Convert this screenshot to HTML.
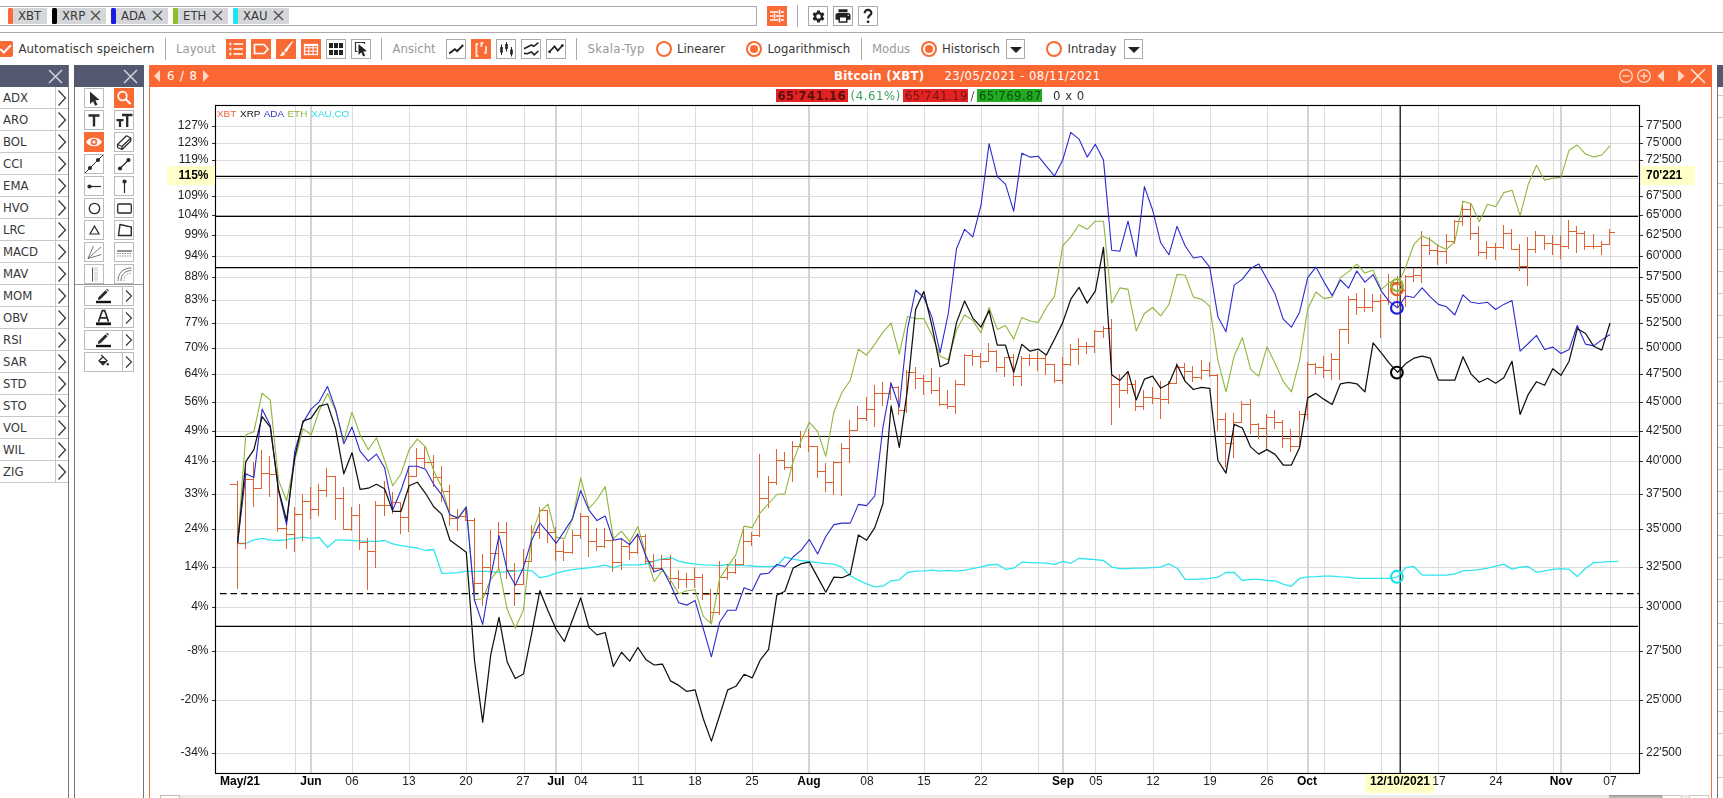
<!DOCTYPE html><html><head><meta charset="utf-8"><title>Chart</title><style>
html,body{margin:0;padding:0}
body{width:1723px;height:798px;overflow:hidden;background:#fff;position:relative;font:13px "DejaVu Sans Condensed","DejaVu Sans","Liberation Sans",sans-serif;color:#383838}
.a{position:absolute}
.t{position:absolute;white-space:nowrap;line-height:16px;height:16px}
.g{color:#999}
.btn{position:absolute;width:18px;height:18px;border:1px solid #aaa;background:#fff;box-sizing:content-box}
.btn.on{background:#f96a35;border-color:#f96a35}
.btn svg{position:absolute;left:0;top:0}
.btn.on svg,.tb.on svg{left:-1px;top:-1px}
.sep{position:absolute;width:1px;background:#aaa;top:38px;height:22px}
.tag{position:absolute;top:8px;height:15.500px;background:#d5d6da;line-height:15.500px}
.tag i{position:absolute;left:0;top:0;width:5px;height:15.500px;border-radius:1.500px}
.tag span{position:absolute;left:10px;top:0}
.tag svg{position:absolute;top:2px}
.radio{position:absolute;width:12px;height:12px;border:2px solid #f96a35;border-radius:50%;top:40.800px;box-sizing:content-box}
.radio.on:after{content:"";position:absolute;left:2px;top:2px;width:8px;height:8px;border-radius:50%;background:#f96a35}
.dd{position:absolute;top:39px;width:17px;height:18px;border:1px solid #aaa;background:#fff}
.dd:after{content:"";position:absolute;left:2.500px;top:6.500px;border:6px solid transparent;border-top:6px solid #222;border-bottom:0}
.ph{position:absolute;top:65px;height:22px;background:#555970}
.row{position:absolute;left:0;width:68px;height:21px;border-bottom:1px solid #c8c8c8}
.row span{position:absolute;left:3px;top:3px;line-height:16px}
.row b{position:absolute;left:55px;top:0;width:1px;height:21px;background:#c8c8c8}
.row svg{position:absolute;left:57px;top:2px}
.tb{position:absolute;width:18px;height:18px;border:1px solid #bbb;background:#fff}
.tb.on{background:#f96a35;border-color:#f96a35}
.tb svg{position:absolute;left:0;top:0}
.tw{position:absolute;left:84px;width:48px;height:18px;border:1px solid #bbb;background:#fff}
.tw b{position:absolute;left:37px;top:0;width:1px;height:18px;background:#bbb}
.tw svg{position:absolute;left:0;top:0}
</style></head><body>
<div class="a" style="left:-2px;top:6px;width:757px;height:18px;border:1px solid #aaa"></div>
<div class="tag" style="left:8px;width:39px"><i style="background:#f96a35"></i><span>XBT</span></div>
<div class="tag" style="left:52px;width:54px"><i style="background:#000"></i><span>XRP</span><svg style="left:38px" width="11" height="11" viewBox="0 0 11 11"><path d="M1 1L10 10M10 1L1 10" stroke="#4a4a4a" stroke-width="1.250"/></svg></div>
<div class="tag" style="left:111px;width:57px"><i style="background:#1a1ae6"></i><span>ADA</span><svg style="left:41px" width="11" height="11" viewBox="0 0 11 11"><path d="M1 1L10 10M10 1L1 10" stroke="#4a4a4a" stroke-width="1.250"/></svg></div>
<div class="tag" style="left:173px;width:55px"><i style="background:#8cbf26"></i><span>ETH</span><svg style="left:39px" width="11" height="11" viewBox="0 0 11 11"><path d="M1 1L10 10M10 1L1 10" stroke="#4a4a4a" stroke-width="1.250"/></svg></div>
<div class="tag" style="left:233px;width:56px"><i style="background:#19e6f0"></i><span>XAU</span><svg style="left:40px" width="11" height="11" viewBox="0 0 11 11"><path d="M1 1L10 10M10 1L1 10" stroke="#4a4a4a" stroke-width="1.250"/></svg></div>
<div class="btn on" style="left:767px;top:6px;width:18px;height:18px"><svg width="20" height="20" viewBox="0 0 20 20"><path d="M3 6H11M14 6H17M3 10H6M9 10H17M3 14H11M14 14H17" stroke="#fff" stroke-width="1.3"/><path d="M12.5 3.5V8.5M7.5 7.5V12.5M12.5 11.5V16.5" stroke="#fff" stroke-width="1.6"/></svg></div>
<div class="sep" style="left:797px;top:5px;height:22px"></div>
<div class="btn" style="left:808px;top:6px"><svg width="15" height="15" style="left:1.500px;top:1.500px" viewBox="0 0 24 24"><path fill="#222" d="M19.14 12.94c.04-.3.06-.61.06-.94 0-.32-.02-.64-.07-.94l2.03-1.58a.49.49 0 0 0 .12-.61l-1.92-3.32a.49.49 0 0 0-.59-.22l-2.39.96c-.5-.38-1.03-.7-1.62-.94l-.36-2.54a.484.484 0 0 0-.48-.41h-3.84c-.24 0-.43.17-.47.41l-.36 2.54c-.59.24-1.13.57-1.62.94l-2.39-.96a.49.49 0 0 0-.59.22L2.74 8.87c-.12.21-.08.47.12.61l2.03 1.58c-.05.3-.09.63-.09.94s.02.64.07.94l-2.03 1.58a.49.49 0 0 0-.12.61l1.92 3.32c.12.22.37.29.59.22l2.39-.96c.5.38 1.03.7 1.62.94l.36 2.54c.05.24.24.41.48.41h3.84c.24 0 .44-.17.47-.41l.36-2.54c.59-.24 1.13-.56 1.62-.94l2.39.96c.22.08.47 0 .59-.22l1.92-3.32c.12-.22.07-.47-.12-.61l-2.01-1.58zM12 15.6A3.6 3.6 0 1 1 12 8.4a3.6 3.6 0 0 1 0 7.2z"/></svg></div>
<div class="btn" style="left:833px;top:6px"><svg width="18" height="18" viewBox="0 0 24 24"><path fill="#222" d="M19 8H5c-1.66 0-3 1.34-3 3v6h4v4h12v-4h4v-6c0-1.66-1.340-3-3-3zm-3 11H8v-5h8v5zm3-7c-.55 0-1-.45-1-1s.45-1 1-1 1 .45 1 1-.45 1-1 1zm-1-9H6v4h12V3z"/></svg></div>
<div class="btn" style="left:858px;top:6px"><svg width="18" height="18" viewBox="0 0 18 18"><path d="M5.6 6.2C5.6 4 7 2.9 9 2.9S12.400 4 12.400 5.900C12.400 8.400 9 8.400 9 11.400" stroke="#222" stroke-width="2.100" fill="none"/><circle cx="9" cy="14.800" r="1.400" fill="#222"/></svg></div>
<div class="a" style="left:0;top:32px;width:1723px;height:1px;background:#aaa"></div>
<div class="a" style="left:-3px;top:41px;width:16px;height:16px;border-radius:2px;background:#f96a35"><svg class="a" style="left:0;top:0" width="16" height="16" viewBox="0 0 15 15"><path d="M3 7.500L6.400 10.800L13 4" stroke="#fff" stroke-width="1.8" fill="none"/></svg></div>
<div class="t" style="left:18.500px;top:41px;letter-spacing:.09px">Automatisch speichern</div>
<div class="sep" style="left:165px"></div>
<div class="t g" style="left:176px;top:41px">Layout</div>
<div class="btn on" style="left:226px;top:39px"><svg width="20" height="20" viewBox="0 0 20 20"><path d="M3.500 5h1.800M3.500 10h1.800M3.500 15h1.800" stroke="#fff" stroke-width="2.400"/><path d="M7.500 5H17M7.500 10H17M7.500 15H17" stroke="#fff" stroke-width="1.700"/></svg></div>
<div class="btn on" style="left:251px;top:39px"><svg width="20" height="20" viewBox="0 0 20 20"><path d="M3.500 5.500H13L17 10L13 14.500H3.500Z" stroke="#fff" stroke-width="1.700" fill="none" stroke-linejoin="round"/></svg></div>
<div class="btn on" style="left:276px;top:39px"><svg width="20" height="20" viewBox="0 0 20 20"><path d="M16.500 2.500L8.500 11.500L10 13Z" fill="#fff" stroke="#fff" stroke-width="1"/><path d="M8 12.500c-1.500 0-2.300 1-2.600 2.200-.2 1-.8 1.600-1.700 2 1.800.5 3.800.2 4.800-.9.800-.9.700-2.100-.5-3.300z" fill="#fff"/></svg></div>
<div class="btn on" style="left:301px;top:39px"><svg width="20" height="20" viewBox="0 0 20 20"><rect x="3.500" y="5.500" width="13" height="10" fill="none" stroke="#fff" stroke-width="1.300"/><path d="M3.500 8.800H16.500M3.500 12.100H16.500M7.800 5.500V15.500M12.100 5.500V15.500" stroke="#fff" stroke-width="1"/><rect x="3.500" y="5" width="13" height="2" fill="#fff"/></svg></div>
<div class="btn" style="left:326px;top:39px"><svg width="18" height="18" viewBox="0 0 18 18"><path d="M2 3h4v5H2zM7 3h4v5H7zM12 3h4v5h-4zM2 10h4v5H2zM7 10h4v5H7zM12 10h4v5h-4z" fill="#222"/></svg></div>
<div class="btn" style="left:351px;top:39px"><svg width="18" height="18" viewBox="0 0 18 18"><path d="M5.500 11.500H3.500V2.500H12.500V4" stroke="#333" stroke-width="1.200" fill="none"/><path d="M6.500 4L6.500 15L9.300 12.300L11.200 16.500L13.200 15.600L11.300 11.500L15 11.300Z" fill="#222"/></svg></div>
<div class="sep" style="left:381px"></div>
<div class="t g" style="left:392.500px;top:41px">Ansicht</div>
<div class="btn" style="left:446px;top:39px"><svg width="18" height="18" viewBox="0 0 18 18"><path d="M2.200 13.400L7.800 9.200L10.100 11.100L16.200 5" stroke="#222" stroke-width="1.900" fill="none"/></svg></div>
<div class="btn on" style="left:471px;top:39px"><svg width="20" height="20" viewBox="0 0 20 20"><path d="M7.300 4.800H5.400V17H7.400M10.400 8V3.900H12.600M13 13.800H15V7" stroke="#ffe6da" stroke-width="1.800" fill="none"/></svg></div>
<div class="btn" style="left:496px;top:39px"><svg width="18" height="18" viewBox="0 0 18 18"><path d="M4.500 4.500V15M9.500 2V11.500M14.500 7V16.500" stroke="#222" stroke-width="1"/><rect x="3.200" y="7" width="2.600" height="5.500" fill="#222"/><rect x="8.200" y="4" width="2.600" height="5" fill="#222"/><rect x="13.200" y="9.500" width="2.600" height="5" fill="#222"/></svg></div>
<div class="btn" style="left:521px;top:39px"><svg width="18" height="18" viewBox="0 0 18 18"><path d="M2 8.700L9.400 5L11.700 6.400L16.400 2.700M2 13.400L5.200 13.800L9.400 12L12.200 14.800L16.400 11" stroke="#222" stroke-width="1.600" fill="none"/></svg></div>
<div class="btn" style="left:546px;top:39px"><svg width="18" height="18" viewBox="0 0 18 18"><path d="M2.400 12L7.500 6.400L10.800 10.600L15.400 5.500" stroke="#222" stroke-width="1.700" fill="none"/><circle cx="2.600" cy="11.800" r="1.400" fill="#222"/><circle cx="15.300" cy="5.600" r="1.400" fill="#222"/></svg></div>
<div class="sep" style="left:576px"></div>
<div class="t g" style="left:587.500px;top:41px;letter-spacing:.37px">Skala-Typ</div>
<div class="radio" style="left:655.800px"></div><div class="t" style="left:677px;top:41px">Linearer</div>
<div class="radio on" style="left:745.800px"></div><div class="t" style="left:767.500px;top:41px">Logarithmisch</div>
<div class="sep" style="left:861px"></div>
<div class="t g" style="left:872px;top:41px">Modus</div>
<div class="radio on" style="left:921.200px"></div><div class="t" style="left:942px;top:41px">Historisch</div>
<div class="dd" style="left:1006px"></div>
<div class="radio" style="left:1045.700px"></div><div class="t" style="left:1067.500px;top:41px">Intraday</div>
<div class="dd" style="left:1124px"></div>
<div class="ph" style="left:0;width:68px"></div><svg class="a" style="left:47.5px;top:68.5px" width="15" height="15" viewBox="0 0 15 15"><path d="M1 1L14 14M14 1L1 14" stroke="#d2d3dc" stroke-width="1.5" fill="none"/></svg>
<div class="row" style="top:87px"><span>ADX</span><b></b><svg width="10" height="18" viewBox="0 0 10 18"><path d="M1.500 1.500L8.500 9L1.500 16.500" stroke="#333" stroke-width="1.200" fill="none"/></svg></div>
<div class="row" style="top:109px"><span>ARO</span><b></b><svg width="10" height="18" viewBox="0 0 10 18"><path d="M1.500 1.500L8.500 9L1.500 16.500" stroke="#333" stroke-width="1.200" fill="none"/></svg></div>
<div class="row" style="top:131px"><span>BOL</span><b></b><svg width="10" height="18" viewBox="0 0 10 18"><path d="M1.500 1.500L8.500 9L1.500 16.500" stroke="#333" stroke-width="1.200" fill="none"/></svg></div>
<div class="row" style="top:153px"><span>CCI</span><b></b><svg width="10" height="18" viewBox="0 0 10 18"><path d="M1.500 1.500L8.500 9L1.500 16.500" stroke="#333" stroke-width="1.200" fill="none"/></svg></div>
<div class="row" style="top:175px"><span>EMA</span><b></b><svg width="10" height="18" viewBox="0 0 10 18"><path d="M1.500 1.500L8.500 9L1.500 16.500" stroke="#333" stroke-width="1.200" fill="none"/></svg></div>
<div class="row" style="top:197px"><span>HVO</span><b></b><svg width="10" height="18" viewBox="0 0 10 18"><path d="M1.500 1.500L8.500 9L1.500 16.500" stroke="#333" stroke-width="1.200" fill="none"/></svg></div>
<div class="row" style="top:219px"><span>LRC</span><b></b><svg width="10" height="18" viewBox="0 0 10 18"><path d="M1.500 1.500L8.500 9L1.500 16.500" stroke="#333" stroke-width="1.200" fill="none"/></svg></div>
<div class="row" style="top:241px"><span>MACD</span><b></b><svg width="10" height="18" viewBox="0 0 10 18"><path d="M1.500 1.500L8.500 9L1.500 16.500" stroke="#333" stroke-width="1.200" fill="none"/></svg></div>
<div class="row" style="top:263px"><span>MAV</span><b></b><svg width="10" height="18" viewBox="0 0 10 18"><path d="M1.500 1.500L8.500 9L1.500 16.500" stroke="#333" stroke-width="1.200" fill="none"/></svg></div>
<div class="row" style="top:285px"><span>MOM</span><b></b><svg width="10" height="18" viewBox="0 0 10 18"><path d="M1.500 1.500L8.500 9L1.500 16.500" stroke="#333" stroke-width="1.200" fill="none"/></svg></div>
<div class="row" style="top:307px"><span>OBV</span><b></b><svg width="10" height="18" viewBox="0 0 10 18"><path d="M1.500 1.500L8.500 9L1.500 16.500" stroke="#333" stroke-width="1.200" fill="none"/></svg></div>
<div class="row" style="top:329px"><span>RSI</span><b></b><svg width="10" height="18" viewBox="0 0 10 18"><path d="M1.500 1.500L8.500 9L1.500 16.500" stroke="#333" stroke-width="1.200" fill="none"/></svg></div>
<div class="row" style="top:351px"><span>SAR</span><b></b><svg width="10" height="18" viewBox="0 0 10 18"><path d="M1.500 1.500L8.500 9L1.500 16.500" stroke="#333" stroke-width="1.200" fill="none"/></svg></div>
<div class="row" style="top:373px"><span>STD</span><b></b><svg width="10" height="18" viewBox="0 0 10 18"><path d="M1.500 1.500L8.500 9L1.500 16.500" stroke="#333" stroke-width="1.200" fill="none"/></svg></div>
<div class="row" style="top:395px"><span>STO</span><b></b><svg width="10" height="18" viewBox="0 0 10 18"><path d="M1.500 1.500L8.500 9L1.500 16.500" stroke="#333" stroke-width="1.200" fill="none"/></svg></div>
<div class="row" style="top:417px"><span>VOL</span><b></b><svg width="10" height="18" viewBox="0 0 10 18"><path d="M1.500 1.500L8.500 9L1.500 16.500" stroke="#333" stroke-width="1.200" fill="none"/></svg></div>
<div class="row" style="top:439px"><span>WIL</span><b></b><svg width="10" height="18" viewBox="0 0 10 18"><path d="M1.500 1.500L8.500 9L1.500 16.500" stroke="#333" stroke-width="1.200" fill="none"/></svg></div>
<div class="row" style="top:461px"><span>ZIG</span><b></b><svg width="10" height="18" viewBox="0 0 10 18"><path d="M1.500 1.500L8.500 9L1.500 16.500" stroke="#333" stroke-width="1.200" fill="none"/></svg></div>
<div class="a" style="left:68px;top:65px;width:1px;height:733px;background:#777"></div>
<div class="a" style="left:74px;top:65px;width:70px;height:733px;border-left:1px solid #777;border-right:1px solid #777;box-sizing:border-box"></div>
<div class="ph" style="left:74px;width:70px"></div><svg class="a" style="left:122.5px;top:68.5px" width="15" height="15" viewBox="0 0 15 15"><path d="M1 1L14 14M14 1L1 14" stroke="#d2d3dc" stroke-width="1.5" fill="none"/></svg>
<div class="tb" style="left:84px;top:88px"><svg width="18" height="18" viewBox="0 0 18 18"><path d="M5 2.500L5 15L8 12.200L10.200 16.800L12.500 15.700L10.400 11.200L14.500 11Z" fill="#2a2a2a"/></svg></div>
<div class="tb on" style="left:114px;top:88px"><svg width="20" height="20" viewBox="0 0 20 20"><circle cx="8.500" cy="8" r="4.300" stroke="#fff" stroke-width="1.700" fill="none"/><path d="M11.800 11.300L16.500 16" stroke="#fff" stroke-width="2"/></svg></div>
<div class="tb" style="left:84px;top:110px"><svg width="18" height="18" viewBox="0 0 18 18"><path d="M3.500 4.500H14.500M9 4.500V15.500" stroke="#2a2a2a" stroke-width="2.400" fill="none"/></svg></div>
<div class="tb" style="left:114px;top:110px"><svg width="18" height="18" viewBox="0 0 18 18"><path d="M7 4H17.500M12.200 4V16" stroke="#2a2a2a" stroke-width="2.300" fill="none"/><path d="M1.500 9.200H8.500M5 9.200V16" stroke="#2a2a2a" stroke-width="2.300" fill="none"/></svg></div>
<div class="tb on" style="left:84px;top:132px"><svg width="20" height="20" viewBox="0 0 20 20"><path d="M2 10C5 4.300 15 4.300 18 10C15 15.700 5 15.700 2 10Z" fill="#fff"/><circle cx="10" cy="10" r="3.300" fill="#f96a35"/><circle cx="10" cy="10" r="1.600" fill="#fff"/></svg></div>
<div class="tb" style="left:114px;top:132px"><svg width="18" height="18" viewBox="0 0 18 18"><path d="M2.500 11.500L11.500 2.800L15.800 5L15.800 8L7 16.500L2.500 14.500ZM2.500 11.500L7 13.500L15.800 5M7 13.500V16.500" stroke="#2a2a2a" stroke-width="1.200" fill="none" stroke-linejoin="round"/></svg></div>
<div class="tb" style="left:84px;top:154px"><svg width="18" height="18" viewBox="0 0 18 18"><path d="M0 18L18 0" stroke="#2a2a2a" stroke-width="1"/><circle cx="5" cy="13" r="2.100" fill="#2a2a2a"/><circle cx="13" cy="5" r="2.100" fill="#2a2a2a"/></svg></div>
<div class="tb" style="left:114px;top:154px"><svg width="18" height="18" viewBox="0 0 18 18"><path d="M5 13.500L13.500 5" stroke="#2a2a2a" stroke-width="1.200"/><circle cx="5" cy="13.500" r="2.100" fill="#2a2a2a"/><circle cx="13.500" cy="5" r="2.100" fill="#2a2a2a"/></svg></div>
<div class="tb" style="left:84px;top:176px"><svg width="18" height="18" viewBox="0 0 18 18"><path d="M4 9.500H16" stroke="#2a2a2a" stroke-width="1.200"/><circle cx="4.500" cy="9.500" r="2.100" fill="#2a2a2a"/></svg></div>
<div class="tb" style="left:114px;top:176px"><svg width="18" height="18" viewBox="0 0 18 18"><path d="M9.500 4V16" stroke="#2a2a2a" stroke-width="1.200"/><circle cx="9.500" cy="4.500" r="2.100" fill="#2a2a2a"/></svg></div>
<div class="tb" style="left:84px;top:198px"><svg width="18" height="18" viewBox="0 0 18 18"><circle cx="9.500" cy="9.500" r="5.200" stroke="#2a2a2a" stroke-width="1.300" fill="none"/></svg></div>
<div class="tb" style="left:114px;top:198px"><svg width="18" height="18" viewBox="0 0 18 18"><rect x="2.700" y="5" width="13.600" height="9" rx="1" stroke="#2a2a2a" stroke-width="1.300" fill="none"/></svg></div>
<div class="tb" style="left:84px;top:220px"><svg width="18" height="18" viewBox="0 0 18 18"><path d="M9.500 5L14 13H5Z" stroke="#2a2a2a" stroke-width="1.200" fill="none"/></svg></div>
<div class="tb" style="left:114px;top:220px"><svg width="18" height="18" viewBox="0 0 18 18"><path d="M5 3.500L16.300 6L16.300 14.500L3.500 14.500Z" stroke="#2a2a2a" stroke-width="1.400" fill="none"/></svg></div>
<div class="tb" style="left:84px;top:242px"><svg width="18" height="18" viewBox="0 0 18 18"><path d="M3 15.500L8.500 3M3 15.500L16 4M3 15.500L16.500 11.500" stroke="#555" stroke-width=".8" fill="none"/></svg></div>
<div class="tb" style="left:114px;top:242px"><svg width="18" height="18" viewBox="0 0 18 18"><path d="M2 7.500H17M2 8.500H17" stroke="#777" stroke-width=".8"/><path d="M2 10.500H17M2 13H17" stroke="#777" stroke-width=".8" stroke-dasharray="1.500 1"/></svg></div>
<div class="tb" style="left:84px;top:264px"><svg width="18" height="18" viewBox="0 0 18 18"><path d="M7.500 2.500V16.500" stroke="#555" stroke-width="1"/><path d="M10 2.500V16.500M12 2.500V16.500" stroke="#888" stroke-width=".8" stroke-dasharray="1.200 1"/></svg></div>
<div class="tb" style="left:114px;top:264px"><svg width="18" height="18" viewBox="0 0 18 18"><path d="M3 16C3 8 8 3 16.500 3M6 16C6 10 10 5.500 16.500 5.500" stroke="#666" stroke-width=".9" fill="none"/><path d="M9 16C9 11.500 12 8 16.500 8" stroke="#888" stroke-width=".8" fill="none" stroke-dasharray="1.500 1"/></svg></div>
<div class="a" style="left:75px;top:284px;width:68px;height:1px;background:#999"></div>
<div class="tw" style="top:286px"><svg width="48" height="18" viewBox="0 0 48 18"><g transform="translate(0,-1.200)"><path d="M13.500 11.500L20.500 4.500L22.500 6.500L15.500 13.500L12.800 14.200Z" fill="#2a2a2a"/><path d="M21.200 3.800L22 3L24 5L23.200 5.800Z" fill="#2a2a2a"/><rect x="11" y="15" width="15" height="2.400" fill="#111"/></g><path d="M41 3.500L46.500 9L41 14.500" stroke="#333" stroke-width="1.100" fill="none"/></svg><b></b></div>
<div class="tw" style="top:308px"><svg width="48" height="18" viewBox="0 0 48 18"><g transform="translate(0,-1.200)"><path d="M13.500 14L17.300 2.800H19.700L23.500 14M15 10H22" stroke="#2a2a2a" stroke-width="1.700" fill="none"/><rect x="11" y="14.600" width="15" height="2.800" fill="#111"/></g><path d="M41 3.500L46.500 9L41 14.500" stroke="#333" stroke-width="1.100" fill="none"/></svg><b></b></div>
<div class="tw" style="top:330px"><svg width="48" height="18" viewBox="0 0 48 18"><g transform="translate(0,-1.200)"><path d="M13.500 11.500L20.500 4.500L22.500 6.500L15.500 13.500L12.800 14.200Z" fill="#2a2a2a"/><path d="M21.200 3.800L22 3L24 5L23.200 5.800Z" fill="#2a2a2a"/><rect x="11" y="15" width="15" height="2.400" fill="#111"/></g><path d="M41 3.500L46.500 9L41 14.500" stroke="#333" stroke-width="1.100" fill="none"/></svg><b></b></div>
<div class="tw" style="top:352px"><svg width="48" height="18" viewBox="0 0 48 18"><g transform="translate(0,-1.200)"><path d="M14 9L18 5L22 9L18 13Z" stroke="#2a2a2a" stroke-width="1.300" fill="none"/><path d="M14 9.300H22L18 13Z" fill="#2a2a2a"/><path d="M16.200 3.200L18.500 5.500" stroke="#2a2a2a" stroke-width="1.200"/><circle cx="22.800" cy="12.500" r="1.200" fill="#2a2a2a"/></g><path d="M41 3.500L46.500 9L41 14.500" stroke="#333" stroke-width="1.100" fill="none"/></svg><b></b></div>
<div class="a" style="left:149px;top:65px;width:1563px;height:22px;background:#fb6733"></div>
<div class="a" style="left:149px;top:87px;width:1px;height:711px;background:#e8743f"></div>
<div class="a" style="left:1711px;top:87px;width:1px;height:711px;background:#e8743f"></div>
<svg class="a" style="left:152px;top:69px" width="60" height="14" viewBox="0 0 60 14"><path d="M8 1V13L2 7Z" fill="#ffd9c4"/><path d="M51 1V13L57 7Z" fill="#ffd9c4"/></svg>
<div class="t" style="left:167px;top:67.500px;color:#fff;letter-spacing:.9px">6 / 8</div>
<div class="t" style="left:834px;top:67.500px;color:#fff;font-weight:bold;font-family:'DejaVu Sans Condensed',sans-serif;letter-spacing:.3px" id="ttl">Bitcoin (XBT)</div>
<div class="t" style="left:944.500px;top:67.500px;color:#fff;letter-spacing:.42px" id="dts">23/05/2021 - 08/11/2021</div>
<svg class="a" style="left:1616px;top:67px" width="95" height="18" viewBox="0 0 95 18"><g stroke="#ffd9c4" stroke-width="1.300" fill="none"><circle cx="10" cy="9" r="6.300"/><path d="M6.500 9H13.500"/><circle cx="28" cy="9" r="6.300"/><path d="M24.500 9H31.500M28 5.500V12.500"/></g><path d="M48 3V15L41.500 9Z" fill="#ffd9c4"/><path d="M62 3V15L68.500 9Z" fill="#ffd9c4"/><path d="M75 2L89 16M89 2L75 16" stroke="#ffe4d6" stroke-width="1.600"/></svg>
<svg id="chart" width="1560" height="706" viewBox="151 88 1560 706" style="position:absolute;left:151px;top:88px;will-change:transform" font-family="Liberation Sans, Arial, sans-serif">
<rect x="151" y="88" width="1560" height="706" fill="#fff"/>
<path d="M215.5 126.5H1639.5M215.5 143.5H1639.5M215.5 160.5H1639.5M215.5 178.5H1639.5M215.5 196.5H1639.5M215.5 215.5H1639.5M215.5 235.5H1639.5M215.5 256.5H1639.5M215.5 277.5H1639.5M215.5 300.5H1639.5M215.5 323.5H1639.5M215.5 348.5H1639.5M215.5 374.5H1639.5M215.5 402.5H1639.5M215.5 431.5H1639.5M215.5 461.5H1639.5M215.5 494.5H1639.5M215.5 529.5H1639.5M215.5 567.5H1639.5M215.5 607.5H1639.5M215.5 651.5H1639.5M215.5 700.5H1639.5M215.5 753.5H1639.5" stroke="#dcdcdc" stroke-width="1" fill="none"/>
<path d="M295.5 105.5V773.5M352.5 105.5V773.5M409.5 105.5V773.5M466.5 105.5V773.5M524.5 105.5V773.5M581.5 105.5V773.5M638.5 105.5V773.5M695.5 105.5V773.5M752.5 105.5V773.5M809.5 105.5V773.5M867.5 105.5V773.5M924.5 105.5V773.5M981.5 105.5V773.5M1038.5 105.5V773.5M1095.5 105.5V773.5M1153.5 105.5V773.5M1210.5 105.5V773.5M1267.5 105.5V773.5M1324.5 105.5V773.5M1381.5 105.5V773.5M1438.5 105.5V773.5M1496.5 105.5V773.5M1553.5 105.5V773.5M1610.5 105.5V773.5" stroke="#dcdcdc" stroke-width="1" fill="none"/>
<path d="M311 105.5V773.5M556 105.5V773.5M809 105.5V773.5M1063 105.5V773.5M1308 105.5V773.5M1561 105.5V773.5" stroke="#d4d4d4" stroke-width="2" fill="none"/>
<path d="M215.5 176.4H1638" stroke="#000" stroke-width="1.15"/>
<path d="M215.5 216.4H1638" stroke="#000" stroke-width="1.15"/>
<path d="M215.5 267.6H1638" stroke="#000" stroke-width="1.15"/>
<path d="M215.5 436.5H1638" stroke="#000" stroke-width="1.15"/>
<path d="M215.5 626.4H1638" stroke="#000" stroke-width="1.15"/>
<path d="M220 593.6H1640" stroke="#000" stroke-width="1.3" stroke-dasharray="6.5 4"/>
<path d="M1400.2 105.5V773.5" stroke="#000" stroke-width="1.2"/>
<polyline points="237.6,543.5 245.8,543.5 253.9,539.9 262.1,538.4 270.3,540.2 278.4,540.5 286.6,539.6 294.8,538.4 303,537.2 311.1,538.4 319.3,537.5 327.5,547.4 335.6,540.2 343.8,540.2 352,540.5 360.1,540.8 368.3,541.4 376.5,541.4 384.6,540.5 392.8,543.8 401,545.6 409.1,546.8 417.3,548 425.5,550.5 433.7,549.5 441.8,573.3 450,573.2 458.2,572.6 466.3,571.1 474.5,571.7 482.7,571.1 490.8,571.7 499,572.3 507.2,571.7 515.3,571.1 523.5,570.2 531.7,570.8 539.9,577.7 548,576.2 556.2,573.2 564.4,571.1 572.5,569.6 580.7,568.7 588.9,567.8 597,566.6 605.2,565.1 613.4,567.8 621.5,564.8 629.7,564.8 637.9,564.8 646.1,564.2 654.2,561.2 662.4,558.8 670.6,557.6 678.7,561.2 686.9,563 695.1,564.2 703.2,564.8 711.4,565.1 719.6,565.7 727.7,564.5 735.9,565.1 744.1,565.7 752.2,566 760.4,566.6 768.6,566.6 776.8,566 784.9,557 793.1,559.1 801.3,560.6 809.4,561.5 817.6,562.7 825.8,563.6 833.9,564.2 842.1,567.2 850.3,575.6 858.4,580.2 866.6,583.8 874.8,586.8 883,586.2 891.1,580.8 899.3,579.8 907.5,572.5 915.6,571.2 923.8,570.8 932,570.2 940.1,571.2 948.3,570.4 956.5,571.2 964.6,570.2 972.8,568.7 981,566.9 989.1,565 997.3,564.4 1005.5,569.3 1013.7,568.2 1021.8,562.2 1030,562.6 1038.2,562.9 1046.3,563.1 1054.5,564.4 1062.7,561.4 1070.8,563.3 1079,558.3 1087.2,559 1095.3,559.6 1103.5,560.5 1111.7,567.1 1119.9,568.7 1128,568.7 1136.2,568.2 1144.4,568.2 1152.5,567.6 1160.7,567.1 1168.9,563.9 1177,568.2 1185.2,579.4 1193.4,579.4 1201.5,579 1209.7,578.3 1217.9,577.2 1226,572.5 1234.2,572.5 1242.4,580.5 1250.6,579.4 1258.7,579.4 1266.9,580.5 1275.1,580.9 1283.2,584.1 1291.4,586.3 1299.6,578.3 1307.7,576.8 1315.9,576.6 1324.1,576.2 1332.2,576.2 1340.4,576.8 1348.6,577.2 1356.8,578.3 1364.9,578.3 1373.1,578.3 1381.3,578.3 1389.4,578.3 1397.6,576.8 1405.8,567.6 1413.9,566.5 1422.1,575.1 1430.3,575.1 1438.4,575.1 1446.6,575.1 1454.8,574 1463,570.8 1471.1,570.4 1479.3,569.7 1487.5,568.2 1495.6,566.1 1503.8,564.4 1512,569.1 1520.1,567.1 1528.3,566.5 1536.5,572.3 1544.6,570.8 1552.8,569.3 1561,568.7 1569.1,569.3 1577.3,576.6 1585.5,568.2 1593.7,562.6 1601.8,562.2 1610,561.6 1618.2,561.4" fill="none" stroke="#2fe6ee" stroke-width="1.3" stroke-linejoin="round"/>
<path d="M237.5 481V589M230 484.5H237.5M245.5 468V549M237.5 543.5H245.5M253.5 462V507M245.5 479.5H253.5M261.5 450V488M253.5 488.5H261.5M269.5 456V497M261.5 473.5H269.5M277.5 472V532M269.5 474.5H277.5M286.5 519V549M277.5 528.5H286.5M294.5 507V552M286.5 534.5H294.5M302.5 494V541M294.5 514.5H302.5M310.5 487V519M302.5 501.5H310.5M318.5 484V516M310.5 509.5H318.5M326.5 468V497M318.5 490.5H326.5M335.5 476V520M326.5 476.5H335.5M343.5 487V530M335.5 498.5H343.5M351.5 507V531M343.5 529.5H351.5M359.5 504V550M351.5 515.5H359.5M367.5 538V590M359.5 542.5H367.5M375.5 501V568M367.5 551.5H375.5M384.5 481V516M375.5 505.5H384.5M392.5 492V514M384.5 505.5H392.5M400.5 502V534M392.5 502.5H400.5M408.5 466V532M400.5 517.5H408.5M416.5 448V477M408.5 476.5H416.5M424.5 447V468M416.5 458.5H424.5M433.5 455V487M424.5 462.5H433.5M441.5 466V502M433.5 477.5H441.5M449.5 485V526M441.5 491.5H449.5M457.5 509V531M449.5 518.5H457.5M465.5 507V521M457.5 516.5H465.5M474.5 518V593M465.5 520.5H474.5M482.5 554V606M474.5 583.5H482.5M490.5 530V581M482.5 567.5H490.5M498.5 522V570M490.5 553.5H498.5M506.5 522V579M498.5 532.5H506.5M514.5 563V606M506.5 570.5H514.5M523.5 549V584M514.5 584.5H523.5M531.5 525V561M523.5 561.5H531.5M539.5 507V539M531.5 532.5H539.5M547.5 510V543M539.5 510.5H547.5M555.5 527V561M547.5 532.5H555.5M563.5 540V561M555.5 551.5H563.5M572.5 530V554M563.5 552.5H572.5M580.5 513V539M572.5 535.5H580.5M588.5 517V557M580.5 516.5H588.5M596.5 528V551M588.5 541.5H596.5M604.5 528V548M596.5 546.5H604.5M612.5 539V572M604.5 540.5H612.5M621.5 539V570M612.5 562.5H621.5M629.5 542V560M621.5 546.5H629.5M637.5 533V554M629.5 552.5H637.5M645.5 534V564M637.5 536.5H645.5M653.5 554V573M645.5 561.5H653.5M661.5 555V570M653.5 568.5H661.5M670.5 555V584M661.5 559.5H670.5M678.5 570V589M670.5 578.5H678.5M686.5 573V588M678.5 579.5H686.5M694.5 567V588M686.5 579.5H694.5M702.5 574V600M694.5 577.5H702.5M710.5 589V622M702.5 594.5H710.5M719.5 561V615M710.5 612.5H719.5M727.5 564V580M719.5 577.5H727.5M735.5 559V574M727.5 572.5H735.5M743.5 527V565M735.5 564.5H743.5M751.5 532V546M743.5 541.5H751.5M759.5 454V537M751.5 535.5H759.5M768.5 476V508M759.5 498.5H768.5M776.5 449V485M768.5 482.5H776.5M784.5 452V470M776.5 460.5H784.5M792.5 441V482M784.5 467.5H792.5M800.5 431V448M792.5 446.5H800.5M808.5 429V452M800.5 436.5H808.5M817.5 446V478M808.5 446.5H817.5M825.5 463V492M817.5 471.5H825.5M833.5 461V495M825.5 482.5H833.5M841.5 443V496M833.5 462.5H841.5M849.5 420V463M841.5 448.5H849.5M857.5 406V431M849.5 430.5H857.5M866.5 397V421M857.5 418.5H866.5M874.5 385V427M866.5 409.5H874.5M882.5 382V406M874.5 393.5H882.5M890.5 382V400M882.5 393.5H890.5M898.5 386V415M890.5 387.5H898.5M906.5 370V413M898.5 410.5H906.5M915.5 367V389M906.5 372.5H915.5M923.5 375V395M915.5 378.5H923.5M931.5 368V394M923.5 381.5H931.5M939.5 377V406M931.5 390.5H939.5M947.5 390V409M939.5 404.5H947.5M955.5 380V414M947.5 406.5H955.5M964.5 354V386M955.5 384.5H964.5M972.5 350V366M964.5 355.5H972.5M980.5 353V368M972.5 356.5H980.5M988.5 343V361M980.5 361.5H988.5M996.5 350V372M988.5 351.5H996.5M1004.5 357V377M996.5 367.5H1004.5M1013.5 354V386M1004.5 357.5H1013.5M1021.5 356V386M1013.5 376.5H1021.5M1029.5 354V366M1021.5 358.5H1029.5M1037.5 351V371M1029.5 358.5H1037.5M1045.5 354V375M1037.5 358.5H1045.5M1054.5 364V383M1045.5 364.5H1054.5M1062.5 357V384M1054.5 380.5H1062.5M1070.5 344V366M1062.5 364.5H1070.5M1078.5 338V365M1070.5 349.5H1078.5M1086.5 342V354M1078.5 346.5H1086.5M1094.5 330V353M1086.5 346.5H1094.5M1103.5 326V338M1094.5 331.5H1103.5M1111.5 319V425M1103.5 328.5H1111.5M1119.5 374V408M1111.5 384.5H1119.5M1127.5 372V394M1119.5 390.5H1127.5M1135.5 380V411M1127.5 384.5H1135.5M1143.5 390V410M1135.5 406.5H1143.5M1152.5 387V404M1143.5 397.5H1152.5M1160.5 381V419M1152.5 398.5H1160.5M1168.5 381V404M1160.5 399.5H1168.5M1176.5 363V384M1168.5 383.5H1176.5M1184.5 363V381M1176.5 367.5H1184.5M1192.5 366V382M1184.5 371.5H1192.5M1201.5 360V380M1192.5 377.5H1201.5M1209.5 362V377M1201.5 370.5H1209.5M1217.5 374V431M1209.5 375.5H1217.5M1225.5 413V467M1217.5 419.5H1225.5M1233.5 413V458M1225.5 443.5H1233.5M1241.5 401V423M1233.5 422.5H1241.5M1250.5 399V434M1241.5 404.5H1250.5M1258.5 423V439M1250.5 424.5H1258.5M1266.5 414V449M1258.5 428.5H1266.5M1274.5 410V429M1266.5 417.5H1274.5M1282.5 420V448M1274.5 422.5H1282.5M1290.5 429V452M1282.5 438.5H1290.5M1299.5 411V448M1290.5 446.5H1299.5M1307.5 362V420M1299.5 414.5H1307.5M1315.5 363V375M1307.5 364.5H1315.5M1323.5 356V378M1315.5 367.5H1323.5M1331.5 353V380M1323.5 370.5H1331.5M1339.5 329V380M1331.5 359.5H1339.5M1348.5 296V344M1339.5 329.5H1348.5M1356.5 293V315M1348.5 299.5H1356.5M1364.5 288V312M1356.5 307.5H1364.5M1372.5 294V312M1364.5 307.5H1372.5M1380.5 294V338M1372.5 301.5H1380.5M1388.5 274V305M1380.5 300.5H1388.5M1397.5 276V308M1388.5 282.5H1397.5M1405.5 275V307M1397.5 290.5H1405.5M1413.5 268V282M1405.5 276.5H1413.5M1421.5 231V283M1413.5 275.5H1421.5M1429.5 237V255M1421.5 245.5H1429.5M1437.5 244V265M1429.5 250.5H1437.5M1446.5 234V264M1437.5 251.5H1446.5M1454.5 220V244M1446.5 241.5H1454.5M1462.5 201V226M1454.5 221.5H1462.5M1470.5 204V240M1462.5 209.5H1470.5M1478.5 226V256M1470.5 233.5H1478.5M1486.5 241V259M1478.5 252.5H1486.5M1495.5 243V260M1486.5 247.5H1495.5M1503.5 225V249M1495.5 247.5H1503.5M1511.5 229V250M1503.5 233.5H1511.5M1519.5 244V271M1511.5 249.5H1519.5M1527.5 237V286M1519.5 266.5H1527.5M1535.5 231V253M1527.5 249.5H1535.5M1544.5 235V250M1535.5 235.5H1544.5M1552.5 235V255M1544.5 243.5H1552.5M1560.5 235V259M1552.5 244.5H1560.5M1568.5 220V249M1560.5 246.5H1568.5M1576.5 226V253M1568.5 231.5H1576.5M1584.5 231V250M1576.5 233.5H1584.5M1593.5 234V249M1584.5 246.5H1593.5M1601.5 241V255M1593.5 246.5H1601.5M1609.5 229V244M1601.5 244.5H1609.5M1609.5 232.5H1615" fill="none" stroke="#e0622e" stroke-width="1" shape-rendering="crispEdges"/>
<polyline points="237.6,542.9 245.8,434.7 253.9,431.7 262.1,393.2 270.3,400.1 278.4,479.8 286.6,500.8 294.8,460.2 303,428.6 311.1,434.7 319.3,410.6 327.5,393.5 335.6,410.6 343.8,440.7 352,412.1 360.1,434.7 368.3,449.7 376.5,437.7 384.6,460.2 392.8,485.8 401,473.8 409.1,449.7 417.3,439.2 425.5,446.7 433.7,470.8 441.8,487.3 450,515.5 458.2,517.6 466.3,506.5 474.5,599.7 482.7,598.8 490.8,579.2 499,568.7 507.2,609.3 515.3,628.3 523.5,609.9 531.7,534.1 539.9,511.6 548,504.1 556.2,537.1 564.4,538.6 572.5,519.1 580.7,477.9 588.9,508.6 597,499.5 605.2,486.6 613.4,538.6 621.5,531.1 629.7,541.7 637.9,526.6 646.1,555.2 654.2,581.7 662.4,570.2 670.6,580.2 678.7,593.7 686.9,590.7 695.1,589.8 703.2,616.2 711.4,623.8 719.6,578.6 727.7,566.6 735.9,554.6 744.1,526.1 752.2,527.6 760.4,512.6 768.6,503.5 776.8,494.5 784.9,493.9 793.1,461.4 801.3,440.4 809.4,422.3 817.6,431.4 825.8,456.3 833.9,411.8 842.1,392.3 850.3,380.2 858.4,349.2 866.6,355.3 874.8,344.1 883,332.1 891.1,323.1 899.3,354.1 907.5,316.5 915.6,318.6 923.8,318.6 932,335.1 940.1,356.2 948.3,359.8 956.5,330 964.6,315 972.8,320.4 981,333 989.1,307.5 997.3,329.4 1005.5,325.5 1013.7,339.1 1021.8,317.4 1030,321 1038.2,322.5 1046.3,307.5 1054.5,296.4 1062.7,245.8 1070.8,236.8 1079,224.8 1087.2,229.3 1095.3,221.2 1103.5,221.2 1111.7,303 1119.9,287.9 1128,289.4 1136.2,330.9 1144.4,313.5 1152.5,307.5 1160.7,315.9 1168.9,304.5 1177,274.4 1185.2,275.2 1193.4,297.1 1201.5,299.2 1209.7,306.2 1217.9,360.3 1226,391.9 1234.2,355.8 1242.4,337.7 1250.6,369.3 1258.7,376.2 1266.9,346.8 1275.1,363.3 1283.2,381.4 1291.4,391.9 1299.6,360.3 1307.7,309.2 1315.9,292 1324.1,298.6 1332.2,297.1 1340.4,277.6 1348.6,271.6 1356.8,264.1 1364.9,273.1 1373.1,270.1 1381.3,289.6 1389.4,282.1 1397.6,285.1 1405.8,266.8 1413.9,244.3 1422.1,235.9 1430.3,239.8 1438.4,245.8 1446.6,249.4 1454.8,241.3 1463,201.3 1471.1,203.7 1479.3,221.7 1487.5,204.3 1495.6,206.7 1503.8,192.6 1512,190.2 1520.1,215.7 1528.3,184.1 1536.5,165.2 1544.6,180.2 1552.8,178.1 1561,177.2 1569.1,150.2 1577.3,145 1585.5,154.1 1593.7,157.1 1601.8,155 1610,145.6" fill="none" stroke="#8fb63c" stroke-width="1.1" stroke-linejoin="round"/>
<polyline points="237.6,542.9 245.8,473.8 253.9,477.4 262.1,409.1 270.3,425.6 278.4,490.3 286.6,524.9 294.8,451.2 303,422.6 311.1,409.1 319.3,401.6 327.5,386.5 335.6,409.1 343.8,443.7 352,427.1 360.1,451.2 368.3,461.1 376.5,454.2 384.6,467.7 392.8,509.8 401,490.3 409.1,466.2 417.3,466.2 425.5,469.2 433.7,484.3 441.8,494.8 450,514.6 458.2,518.2 466.3,507.1 474.5,600.3 482.7,624.4 490.8,576.2 499,535.6 507.2,570.2 515.3,585.3 523.5,567.2 531.7,540.2 539.9,523 548,532.6 556.2,543.2 564.4,531.1 572.5,518.5 580.7,490.5 588.9,510.1 597,520.6 605.2,516.1 613.4,540.2 621.5,538.6 629.7,544.7 637.9,534.1 646.1,556.7 654.2,571.7 662.4,568.7 670.6,584.7 678.7,602.7 686.9,605.1 695.1,600.6 703.2,628.3 711.4,656.8 719.6,622.3 727.7,610.2 735.9,610.2 744.1,587.7 752.2,590.7 760.4,574.1 768.6,573.2 776.8,564.5 784.9,566.6 793.1,557 801.3,550.1 809.4,539.5 817.6,554 825.8,536.5 833.9,524.6 842.1,523.1 850.3,523.1 858.4,504.4 866.6,505.6 874.8,496 883,426.8 891.1,383.2 899.3,407.3 907.5,329.1 915.6,290 923.8,297.5 932,317.1 940.1,352.6 948.3,313.5 956.5,248.8 964.6,229.3 972.8,236.8 981,205.2 989.1,143.6 997.3,176.7 1005.5,184.2 1013.7,211.2 1021.8,153.2 1030,157.1 1038.2,156.2 1046.3,166.1 1054.5,176.1 1062.7,160.1 1070.8,132.4 1079,139.1 1087.2,157.1 1095.3,144.2 1103.5,160.1 1111.7,250.3 1119.9,251.2 1128,221.2 1136.2,256.4 1144.4,186.6 1152.5,209.7 1160.7,242.8 1168.9,254.8 1177,226.3 1185.2,246 1193.4,258 1201.5,256.5 1209.7,267.1 1217.9,316.7 1226,331.7 1234.2,285.1 1242.4,279.1 1250.6,268.6 1258.7,264.1 1266.9,279.1 1275.1,294.1 1283.2,319.1 1291.4,327.2 1299.6,312.2 1307.7,277.6 1315.9,267.1 1324.1,282.1 1332.2,295.6 1340.4,280 1348.6,288.1 1356.8,271 1364.9,282.1 1373.1,274.6 1381.3,291.1 1389.4,301.7 1397.6,307.7 1405.8,296 1413.9,297.5 1422.1,287.9 1430.3,296.9 1438.4,304.4 1446.6,306.8 1454.8,315 1463,294.8 1471.1,302.3 1479.3,303.5 1487.5,302.3 1495.6,309.5 1503.8,304.4 1512,300.5 1520.1,351.1 1528.3,343.5 1536.5,335.4 1544.6,349.5 1552.8,347.1 1561,353.5 1569.1,349.5 1577.3,325.5 1585.5,344.1 1593.7,345.9 1601.8,339.9 1610,334.5" fill="none" stroke="#2a2ad0" stroke-width="1.1" stroke-linejoin="round"/>
<polyline points="237.6,542.9 245.8,461.7 253.9,449.7 262.1,416.6 270.3,427.1 278.4,488.8 286.6,520.4 294.8,457.2 303,421.1 311.1,418.1 319.3,406.1 327.5,404 335.6,428.6 343.8,473.8 352,452.7 360.1,489.4 368.3,488.2 376.5,484.3 384.6,488.8 392.8,511.4 401,511.4 409.1,485.8 417.3,482.2 425.5,493.3 433.7,506.8 441.8,514.4 450,540.2 458.2,546.2 466.3,552.2 474.5,660.5 482.7,722.1 490.8,654.4 499,617.4 507.2,662 515.3,678.5 523.5,674 531.7,633.4 539.9,590.7 548,610.8 556.2,629.5 564.4,641.5 572.5,619.8 580.7,597.9 588.9,627.4 597,634.9 605.2,632.5 613.4,666.5 621.5,652.3 629.7,661.1 637.9,647.5 646.1,659.8 654.2,665 662.4,664.1 670.6,680.9 678.7,685.4 686.9,691.4 695.1,689.9 703.2,718.5 711.4,741.1 719.6,715.5 727.7,689.9 735.9,686.3 744.1,674.3 752.2,677.9 760.4,659.8 768.6,649.3 776.8,595.2 784.9,591.3 793.1,568.1 801.3,563.6 809.4,562.1 817.6,577.1 825.8,592.2 833.9,577.1 842.1,577.7 850.3,574.1 858.4,535 866.6,540.2 874.8,527.6 883,503.5 891.1,405.8 899.3,447.3 907.5,389.2 915.6,309.5 923.8,291.5 932,326.1 940.1,366.7 948.3,363.1 956.5,322.6 964.6,301 972.8,318.1 981,327.1 989.1,310.6 997.3,345.2 1005.5,345.2 1013.7,372.3 1021.8,344.3 1030,351.2 1038.2,349.1 1046.3,355.1 1054.5,339.2 1062.7,322.6 1070.8,299.2 1079,287.4 1087.2,303.1 1095.3,291.1 1103.5,247.4 1111.7,374.7 1119.9,380.4 1128,371.4 1136.2,399.9 1144.4,379.2 1152.5,376.2 1160.7,388.2 1168.9,383.7 1177,364.7 1185.2,381.4 1193.4,389.5 1201.5,387.4 1209.7,388.3 1217.9,460.5 1226,473.1 1234.2,424.4 1242.4,428 1250.6,446.9 1258.7,454.1 1266.9,449.6 1275.1,454.4 1283.2,465 1291.4,465 1299.6,447.5 1307.7,397.9 1315.9,393.4 1324.1,399.4 1332.2,404.5 1340.4,383.8 1348.6,382.3 1356.8,383.8 1364.9,391.9 1373.1,342.9 1381.3,352.8 1389.4,363.3 1397.6,372.3 1405.8,363.6 1413.9,358.2 1422.1,356.1 1430.3,358.2 1438.4,380.2 1446.6,380.2 1454.8,380.2 1463,356.7 1471.1,374.1 1479.3,382.3 1487.5,378.3 1495.6,383.2 1503.8,377.7 1512,361.2 1520.1,414.4 1528.3,394.3 1536.5,381.7 1544.6,385.3 1552.8,368.7 1561,375.3 1569.1,361.2 1577.3,328.7 1585.5,333.5 1593.7,346.2 1601.8,350.1 1610,323" fill="none" stroke="#111" stroke-width="1.25" stroke-linejoin="round"/>
<circle cx="1396.9" cy="289.3" r="5.9" fill="none" stroke="#e0622e" stroke-width="2.1"/>
<circle cx="1396.9" cy="285.1" r="5.9" fill="none" stroke="#8fb63c" stroke-width="2.1"/>
<circle cx="1396.9" cy="307.9" r="5.9" fill="none" stroke="#1a1ae0" stroke-width="2.1"/>
<circle cx="1396.9" cy="372.6" r="5.9" fill="none" stroke="#000" stroke-width="2.1"/>
<circle cx="1396.9" cy="576.8" r="5.9" fill="none" stroke="#19dfe8" stroke-width="2.1"/>
<rect x="215.5" y="105.5" width="1424" height="668" fill="none" stroke="#000" stroke-width="1.15"/>
<rect x="167" y="166" width="48" height="19" fill="#ffffc8"/>
<rect x="1641" y="166" width="54" height="19" fill="#ffffc8"/>
<g font-size="12" fill="#222">
<text x="208.5" y="129" text-anchor="end">127%</text>
<text x="1646" y="129">77'500</text>
<text x="208.5" y="145.6" text-anchor="end">123%</text>
<text x="1646" y="145.6">75'000</text>
<text x="208.5" y="162.8" text-anchor="end">119%</text>
<text x="1646" y="162.8">72'500</text>
<text x="208.5" y="179.3" text-anchor="end" font-weight="bold" fill="#000">115%</text>
<text x="1646" y="179.3" font-weight="bold" fill="#000">70'221</text>
<text x="208.5" y="199" text-anchor="end">109%</text>
<text x="1646" y="199">67'500</text>
<text x="208.5" y="218.2" text-anchor="end">104%</text>
<text x="1646" y="218.2">65'000</text>
<text x="208.5" y="238" text-anchor="end">99%</text>
<text x="1646" y="238">62'500</text>
<text x="208.5" y="258.7" text-anchor="end">94%</text>
<text x="1646" y="258.7">60'000</text>
<text x="208.5" y="280.3" text-anchor="end">88%</text>
<text x="1646" y="280.3">57'500</text>
<text x="208.5" y="302.8" text-anchor="end">83%</text>
<text x="1646" y="302.8">55'000</text>
<text x="208.5" y="326.4" text-anchor="end">77%</text>
<text x="1646" y="326.4">52'500</text>
<text x="208.5" y="351.2" text-anchor="end">70%</text>
<text x="1646" y="351.2">50'000</text>
<text x="208.5" y="377.2" text-anchor="end">64%</text>
<text x="1646" y="377.2">47'500</text>
<text x="208.5" y="404.6" text-anchor="end">56%</text>
<text x="1646" y="404.6">45'000</text>
<text x="208.5" y="433.5" text-anchor="end">49%</text>
<text x="1646" y="433.5">42'500</text>
<text x="208.5" y="464.3" text-anchor="end">41%</text>
<text x="1646" y="464.3">40'000</text>
<text x="208.5" y="497" text-anchor="end">33%</text>
<text x="1646" y="497">37'500</text>
<text x="208.5" y="531.9" text-anchor="end">24%</text>
<text x="1646" y="531.9">35'000</text>
<text x="208.5" y="569.5" text-anchor="end">14%</text>
<text x="1646" y="569.5">32'500</text>
<text x="208.5" y="610.1" text-anchor="end">4%</text>
<text x="1646" y="610.1">30'000</text>
<text x="208.5" y="654.2" text-anchor="end">-8%</text>
<text x="1646" y="654.2">27'500</text>
<text x="208.5" y="702.5" text-anchor="end">-20%</text>
<text x="1646" y="702.5">25'000</text>
<text x="208.5" y="755.9" text-anchor="end">-34%</text>
<text x="1646" y="755.9">22'500</text>
</g>
<path d="M212 126.5H215M1640 126.5H1643M212 143.5H215M1640 143.5H1643M212 160.5H215M1640 160.5H1643M212 196.5H215M1640 196.5H1643M212 215.5H215M1640 215.5H1643M212 235.5H215M1640 235.5H1643M212 256.5H215M1640 256.5H1643M212 277.5H215M1640 277.5H1643M212 300.5H215M1640 300.5H1643M212 323.5H215M1640 323.5H1643M212 348.5H215M1640 348.5H1643M212 374.5H215M1640 374.5H1643M212 402.5H215M1640 402.5H1643M212 431.5H215M1640 431.5H1643M212 461.5H215M1640 461.5H1643M212 494.5H215M1640 494.5H1643M212 529.5H215M1640 529.5H1643M212 567.5H215M1640 567.5H1643M212 607.5H215M1640 607.5H1643M212 651.5H215M1640 651.5H1643M212 700.5H215M1640 700.5H1643M212 753.5H215M1640 753.5H1643" stroke="#5a2020" stroke-width="1"/>
<rect x="1365" y="774" width="69" height="19" fill="#ffffc8"/>
<g font-size="12" fill="#222" text-anchor="middle">
<text x="240" y="785" font-weight="bold" fill="#000">May/21</text>
<text x="311" y="785" font-weight="bold" fill="#000">Jun</text>
<text x="352" y="785">06</text>
<text x="409" y="785">13</text>
<text x="466" y="785">20</text>
<text x="523" y="785">27</text>
<text x="556" y="785" font-weight="bold" fill="#000">Jul</text>
<text x="581" y="785">04</text>
<text x="638" y="785">11</text>
<text x="695" y="785">18</text>
<text x="752" y="785">25</text>
<text x="809" y="785" font-weight="bold" fill="#000">Aug</text>
<text x="867" y="785">08</text>
<text x="924" y="785">15</text>
<text x="981" y="785">22</text>
<text x="1063" y="785" font-weight="bold" fill="#000">Sep</text>
<text x="1096" y="785">05</text>
<text x="1153" y="785">12</text>
<text x="1210" y="785">19</text>
<text x="1267" y="785">26</text>
<text x="1307" y="785" font-weight="bold" fill="#000">Oct</text>
<text x="1439" y="785">17</text>
<text x="1496" y="785">24</text>
<text x="1561" y="785" font-weight="bold" fill="#000">Nov</text>
<text x="1610" y="785">07</text>
<text x="1400" y="785" font-weight="bold" fill="#000">12/10/2021</text>
</g>
<text x="217" y="116.800" font-size="9.900" word-spacing="1.300"><tspan fill="#e8603c">XBT</tspan> <tspan fill="#111">XRP</tspan> <tspan fill="#3535c8">ADA</tspan> <tspan fill="#8fb63c">ETH</tspan> <tspan fill="#2fe0e8">XAU,CO</tspan></text>
</svg>
<div class="a" style="left:776px;top:88.500px;width:72px;height:13.500px;background:#e32222"></div>
<div class="t" style="left:777.500px;top:88px;color:#5a0d0d;font-weight:bold;letter-spacing:.4px" id="q1">65'741.16</div>
<div class="t" style="left:850.500px;top:88px;color:#3f9e5f;letter-spacing:.6px">(4.61%)</div>
<div class="a" style="left:903px;top:88.500px;width:64.500px;height:13.500px;background:#e32222"></div>
<div class="t" style="left:905px;top:88px;color:#7a1414;letter-spacing:.42px" id="q2">65'741.19</div>
<div class="t" style="left:970.500px;top:88px;color:#555">/</div>
<div class="a" style="left:977px;top:88.500px;width:65px;height:13.500px;background:#22aa22"></div>
<div class="t" style="left:979px;top:88px;color:#0b4f0b;letter-spacing:.42px" id="q3">65'769.87</div>
<div class="t" style="left:1053px;top:88px;color:#333;letter-spacing:.5px">0 x 0</div>
<div class="a" style="left:160px;top:795px;width:1549px;height:3px;background:#ececec"></div>
<div class="a" style="left:160px;top:795px;width:20px;height:3px;background:#fff;border:1px solid #bbb;box-sizing:border-box;border-bottom:0"></div>
<div class="a" style="left:1609px;top:795px;width:53px;height:3px;background:#b5b5b5;border-top:1px solid #999;box-sizing:border-box"></div>
<div class="a" style="left:1662px;top:795px;width:20px;height:3px;background:#fff;border:1px solid #ccc;box-sizing:border-box;border-bottom:0"></div>
<div class="a" style="left:1689px;top:795px;width:20px;height:3px;background:#fff;border:1px solid #ccc;box-sizing:border-box;border-bottom:0"></div>
<div class="a" style="left:1717px;top:65px;width:6px;height:22px;background:#555970"></div>
<div class="a" style="left:1717px;top:87px;width:1px;height:711px;background:#777"></div>
<div class="a" style="left:1718px;top:95px;width:5px;height:1px;background:#c8c8c8"></div>
<div class="a" style="left:1718px;top:117px;width:5px;height:1px;background:#c8c8c8"></div>
<div class="a" style="left:1718px;top:139px;width:5px;height:1px;background:#c8c8c8"></div>
<div class="a" style="left:1718px;top:161px;width:5px;height:1px;background:#c8c8c8"></div>
<div class="a" style="left:1718px;top:183px;width:5px;height:1px;background:#c8c8c8"></div>
<div class="a" style="left:1718px;top:205px;width:5px;height:1px;background:#c8c8c8"></div>
<div class="a" style="left:1718px;top:227px;width:5px;height:1px;background:#c8c8c8"></div>
<div class="a" style="left:1718px;top:249px;width:5px;height:1px;background:#c8c8c8"></div>
<div class="a" style="left:1718px;top:271px;width:5px;height:1px;background:#c8c8c8"></div>
<div class="a" style="left:1718px;top:293px;width:5px;height:1px;background:#c8c8c8"></div>
<div class="a" style="left:1718px;top:315px;width:5px;height:1px;background:#c8c8c8"></div>
<div class="a" style="left:1718px;top:337px;width:5px;height:1px;background:#c8c8c8"></div>
<div class="a" style="left:1718px;top:359px;width:5px;height:1px;background:#c8c8c8"></div>
<div class="a" style="left:1718px;top:381px;width:5px;height:1px;background:#c8c8c8"></div>
<div class="a" style="left:1718px;top:403px;width:5px;height:1px;background:#c8c8c8"></div>
<div class="a" style="left:1718px;top:425px;width:5px;height:1px;background:#c8c8c8"></div>
<div class="a" style="left:1718px;top:447px;width:5px;height:1px;background:#c8c8c8"></div>
<div class="a" style="left:1718px;top:469px;width:5px;height:1px;background:#c8c8c8"></div>
<div class="a" style="left:1718px;top:491px;width:5px;height:1px;background:#c8c8c8"></div>
<div class="a" style="left:1718px;top:513px;width:5px;height:1px;background:#c8c8c8"></div>
<div class="a" style="left:1718px;top:535px;width:5px;height:1px;background:#c8c8c8"></div>
<div class="a" style="left:1718px;top:557px;width:5px;height:1px;background:#c8c8c8"></div>
<div class="a" style="left:1718px;top:579px;width:5px;height:1px;background:#c8c8c8"></div>
<div class="a" style="left:1718px;top:601px;width:5px;height:1px;background:#c8c8c8"></div>
<div class="a" style="left:1718px;top:623px;width:5px;height:1px;background:#c8c8c8"></div>
<div class="a" style="left:1718px;top:645px;width:5px;height:1px;background:#c8c8c8"></div>
<div class="a" style="left:1718px;top:667px;width:5px;height:1px;background:#c8c8c8"></div>
<div class="a" style="left:1718px;top:689px;width:5px;height:1px;background:#c8c8c8"></div>
<div class="a" style="left:1718px;top:711px;width:5px;height:1px;background:#c8c8c8"></div>
<div class="a" style="left:1718px;top:733px;width:5px;height:1px;background:#c8c8c8"></div>
<div class="a" style="left:1718px;top:755px;width:5px;height:1px;background:#c8c8c8"></div>
<div class="a" style="left:1718px;top:777px;width:5px;height:1px;background:#c8c8c8"></div>
<div class="a" style="left:1718px;top:799px;width:5px;height:1px;background:#c8c8c8"></div>
</body></html>
